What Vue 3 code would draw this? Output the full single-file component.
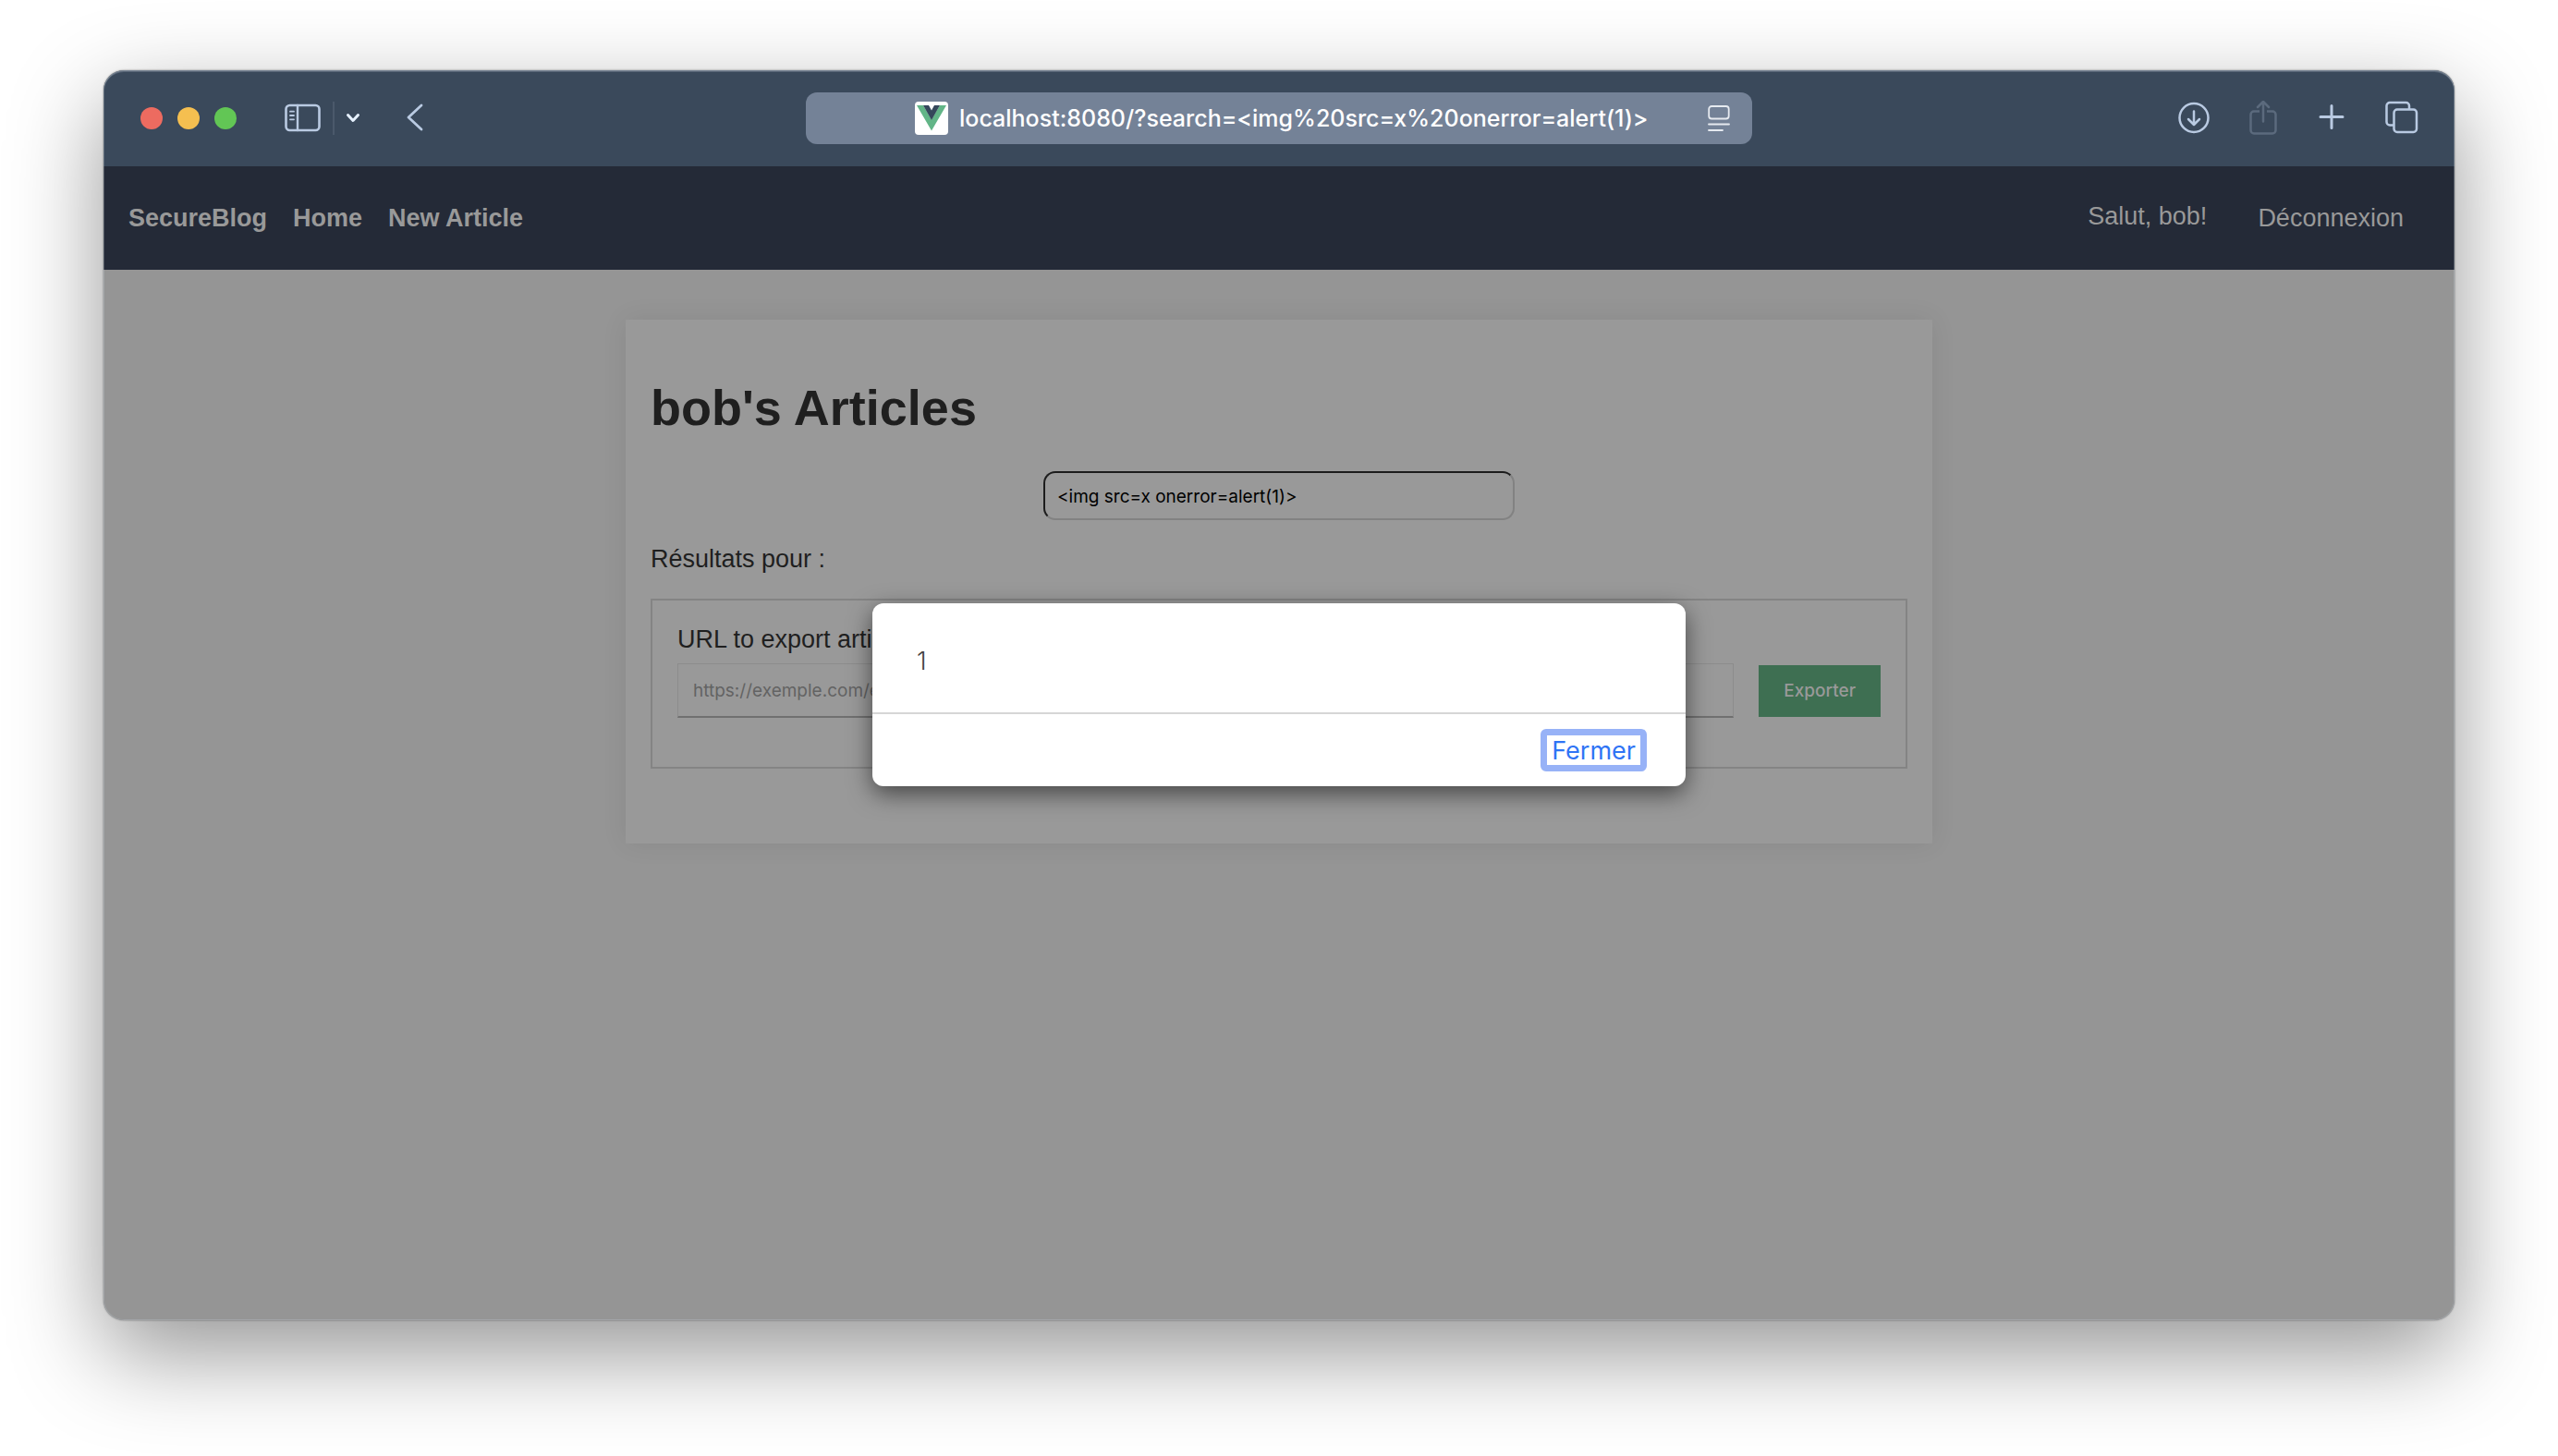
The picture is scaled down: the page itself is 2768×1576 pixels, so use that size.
<script setup>
import { ref } from 'vue'

const address = ref('localhost:8080/?search=<img%20src=x%20onerror=alert(1)>')
const search = ref('<img src=x onerror=alert(1)>')
const exportUrl = ref('')
</script>

<template>
  <div class="desktop">
    <div class="window">
      <header class="toolbar">
        <div class="side">
          <div class="lights">
            <button class="light red" aria-label="Close window"></button>
            <button class="light yellow" aria-label="Minimize window"></button>
            <button class="light green" aria-label="Zoom window"></button>
          </div>
          <button class="tool sidebar" aria-label="Sidebar">
            <svg width="40" height="32" viewBox="0 0 40 32" fill="none" stroke="currentColor" stroke-linecap="round">
              <rect x="1.5" y="2" width="36" height="27" rx="4" stroke-width="2.6" />
              <path d="M14 2v27" stroke-width="2.4" />
              <path d="M6 8.7h4M6 13h4M6 17.3h4" stroke-width="1.8" />
            </svg>
          </button>
          <span class="divider"></span>
          <button class="tool chevron" aria-label="Tab groups">
            <svg width="16" height="12" viewBox="0 0 16 12" fill="none" stroke="currentColor" stroke-width="3" stroke-linecap="round" stroke-linejoin="round">
              <path d="M2.5 2.5L8 8.5l5.5-6" />
            </svg>
          </button>
          <button class="tool" aria-label="Back">
            <svg width="20" height="32" viewBox="0 0 20 32" fill="none" stroke="currentColor" stroke-width="2.8" stroke-linecap="round" stroke-linejoin="round">
              <path d="M17 2L3 15l14 13" />
            </svg>
          </button>
        </div>

        <div class="address">
          <svg class="favicon" width="36" height="36" viewBox="0 0 36 36">
            <rect width="36" height="36" rx="4" fill="#fff" />
            <path d="M2 4h7l9 15.5L27 4h7L18 31.5z" fill="#62b587" />
            <path d="M9 4h6l3 5.5L21 4h6l-9 16z" fill="#35475b" />
          </svg>
          <input v-model="address" class="url" aria-label="Address" spellcheck="false" />
          <button class="reader" aria-label="Reader">
            <svg width="24" height="30" viewBox="0 0 24 30" fill="none" stroke="currentColor" stroke-width="1.8" stroke-linecap="round">
              <rect x="1.2" y="2" width="21.5" height="13.5" rx="3" />
              <path d="M1 21.5h22M1 28h15" />
            </svg>
          </button>
        </div>

        <div class="side actions">
          <button class="tool" aria-label="Downloads">
            <svg width="36" height="38" viewBox="0 0 36 38" fill="none" stroke="currentColor" stroke-width="2.5" stroke-linecap="round" stroke-linejoin="round">
              <circle cx="18" cy="18.5" r="15.5" />
              <path d="M18 11.500v14M12 20l6 6 6-6" />
            </svg>
          </button>
          <button class="tool muted" aria-label="Share" disabled>
            <svg width="36" height="38" viewBox="0 0 36 38" fill="none" stroke="currentColor" stroke-width="2.5" stroke-linecap="round" stroke-linejoin="round">
              <path d="M14 11.5H8a3.500 3.500 0 0 0-3.500 3.500v17A3.500 3.500 0 0 0 8 35.500h20a3.500 3.500 0 0 0 3.500-3.500v-17A3.500 3.500 0 0 0 28 11.500h-6" stroke-linecap="butt" />
              <path d="M18 22.500V1.500M12 7l6-6 6 6" />
            </svg>
          </button>
          <button class="tool" aria-label="New tab">
            <svg width="36" height="38" viewBox="0 0 36 38" fill="none" stroke="currentColor" stroke-width="3" stroke-linecap="round">
              <path d="M17 5.500v24M5 17.500h24" />
            </svg>
          </button>
          <button class="tool" aria-label="Tab overview">
            <svg width="36" height="38" viewBox="0 0 36 38" fill="none" stroke="currentColor" stroke-width="2.5">
              <rect x="9.500" y="9.500" width="24.500" height="24.500" rx="3.500" />
              <path d="M9 26.500H5a3.500 3.500 0 0 1-3.500-3.500V5.500A3.500 3.500 0 0 1 5 2h17.500A3.500 3.500 0 0 1 26 5.500v4" />
            </svg>
          </button>
        </div>
      </header>

      <div class="viewport">
        <nav class="navbar">
          <div class="links">
            <a href="#">SecureBlog</a>
            <a href="#">Home</a>
            <a href="#">New Article</a>
          </div>
          <div class="account">
            <span class="greeting">Salut, bob!</span>
            <a href="#">Déconnexion</a>
          </div>
        </nav>

        <main class="card">
          <h1>bob's Articles</h1>
          <input v-model="search" class="search" aria-label="Search articles" spellcheck="false" />
          <p class="results">Résultats pour :</p>
          <form class="export" @submit.prevent>
            <label for="export-url">URL to export articles</label>
            <div class="row">
              <input id="export-url" v-model="exportUrl" class="export-url" placeholder="https://exemple.com/export" />
              <button class="submit">Exporter</button>
            </div>
          </form>
        </main>

        <dialog class="alert" open aria-label="Alert">
          <p>1</p>
          <footer><button class="close">Fermer</button></footer>
        </dialog>
      </div>
    </div>
  </div>
</template>

<style>
body {
  margin: 0;
  background: #fff;
}
</style>

<style scoped>
* {
  box-sizing: border-box;
}

button,
input {
  margin: 0;
  padding: 0;
  border: 0;
  border-radius: 0;
  background: none;
  font: inherit;
  color: inherit;
  outline: none;
}

a {
  color: inherit;
  text-decoration: none;
}

svg {
  display: block;
}

.desktop {
  display: flex;
  min-height: 100vh;
  padding: 76px 112px 147px;
  overflow: hidden;
  font-family: "Liberation Sans", Arial, sans-serif;
  font-size: 27px;
  line-height: 31px;
}

.window {
  position: relative;
  display: flex;
  flex: 1;
  flex-direction: column;
  border-radius: 22px;
  background: #959595;
  box-shadow: 0 0 2px rgba(0, 0, 0, 0.5), 0 36px 100px rgba(0, 0, 0, 0.42);
}

.window::after {
  content: "";
  position: absolute;
  inset: 0;
  border-radius: 22px;
  box-shadow: inset 0 0 0 1px rgba(190, 200, 210, 0.3), inset 0 2px 0 rgba(190, 200, 210, 0.25);
  pointer-events: none;
}

.toolbar {
  display: flex;
  align-items: center;
  height: 104px;
  padding: 0 39px;
  border-radius: 22px 22px 0 0;
  background: #3a495b;
  color: #b9cae2;
}

.side {
  display: flex;
  flex: 1;
  align-items: center;
}

.lights {
  display: flex;
  gap: 16px;
  margin-left: 1px;
}

.light {
  width: 24px;
  height: 24px;
  border-radius: 50%;
}

.red {
  background: #ed6b60;
}

.yellow {
  background: #f5bf50;
}

.green {
  background: #62c655;
}

.sidebar {
  margin-left: 52px;
}

.divider {
  width: 2px;
  height: 36px;
  margin: 0 12px;
  background: #4b596b;
}

.chevron {
  margin-right: 49px;
  color: #e6f1ff;
}

.actions {
  justify-content: flex-end;
  gap: 39px;
}

.muted {
  color: #5b6a7d;
}

.address {
  display: flex;
  align-items: center;
  width: 1024px;
  height: 56px;
  padding: 0 24px 0 118px;
  border-radius: 12px;
  background: #748297;
  color: #fff;
}

.favicon {
  flex: none;
}

.url {
  flex: 1;
  min-width: 0;
  height: 56px;
  margin-left: 12px;
  font-family: Inter, sans-serif;
  font-size: 25px;
  font-weight: 500;
}

.reader {
  color: #e6eaf0;
}

.viewport {
  position: relative;
  flex: 1;
}

.navbar {
  display: flex;
  align-items: center;
  justify-content: space-between;
  height: 112px;
  padding: 0 55px 0 27px;
  background: #242a37;
  color: #999;
}

.links {
  display: flex;
  gap: 28px;
  font-weight: 700;
}

.account {
  display: flex;
  gap: 55px;
}

.greeting {
  padding-bottom: 2px;
  margin-top: -2px;
}

.card {
  display: flex;
  flex-direction: column;
  max-width: 1414px;
  margin: 54px auto;
  padding: 28px 27px 81px;
  background: #999;
  box-shadow: 0 0 26px rgba(0, 0, 0, 0.08);
  color: #1f1f1f;
}

h1 {
  margin: 36px 0 38px;
  font-size: 54px;
  line-height: 62px;
}

.search {
  align-self: center;
  width: 510px;
  height: 53px;
  padding: 1px 13px 0;
  border: 2px solid;
  border-color: #1c1c1c #828282 #828282 #1c1c1c;
  border-radius: 13px;
  font-family: Inter, sans-serif;
  font-size: 19px;
  color: #000;
}

.results {
  margin: 27px 0;
}

.export {
  padding: 27px 27px 53px;
  border: 2px solid #848484;
}

.export label {
  display: block;
}

.row {
  display: flex;
  align-items: center;
  gap: 27px;
  margin-top: 10px;
}

.export-url {
  flex: 1;
  min-width: 0;
  height: 59px;
  padding: 1px 16px 0;
  border: 1px solid #8c8c8c;
  border-bottom: 2px solid #707070;
  font-family: Inter, sans-serif;
  font-size: 19px;
}

.export-url::placeholder {
  color: #636363;
  opacity: 1;
}

.submit {
  height: 56px;
  padding: 0 27px;
  background: #3e6f52;
  font-family: Inter, sans-serif;
  font-size: 19px;
  font-weight: 500;
  color: #999;
}

.alert {
  position: absolute;
  inset: 473px 0 auto;
  width: 880px;
  margin: 0 auto;
  padding: 0;
  border: 0;
  border-radius: 12px;
  background: #fff;
  box-shadow: 0 8px 26px rgba(0, 0, 0, 0.55);
  font-family: Inter, sans-serif;
  color: #444;
}

.alert p {
  margin: 0;
  padding: 47px 48px 40px;
  font-weight: 300;
}

.alert footer {
  display: flex;
  justify-content: flex-end;
  padding: 16px 42px;
  border-top: 2px solid #d6d6d6;
}

.close {
  height: 46px;
  padding: 1px 5px 0;
  border: 7px solid #97b2f7;
  border-radius: 6px;
  font-size: 27px;
  line-height: 31px;
  color: #2f74f5;
}
</style>
